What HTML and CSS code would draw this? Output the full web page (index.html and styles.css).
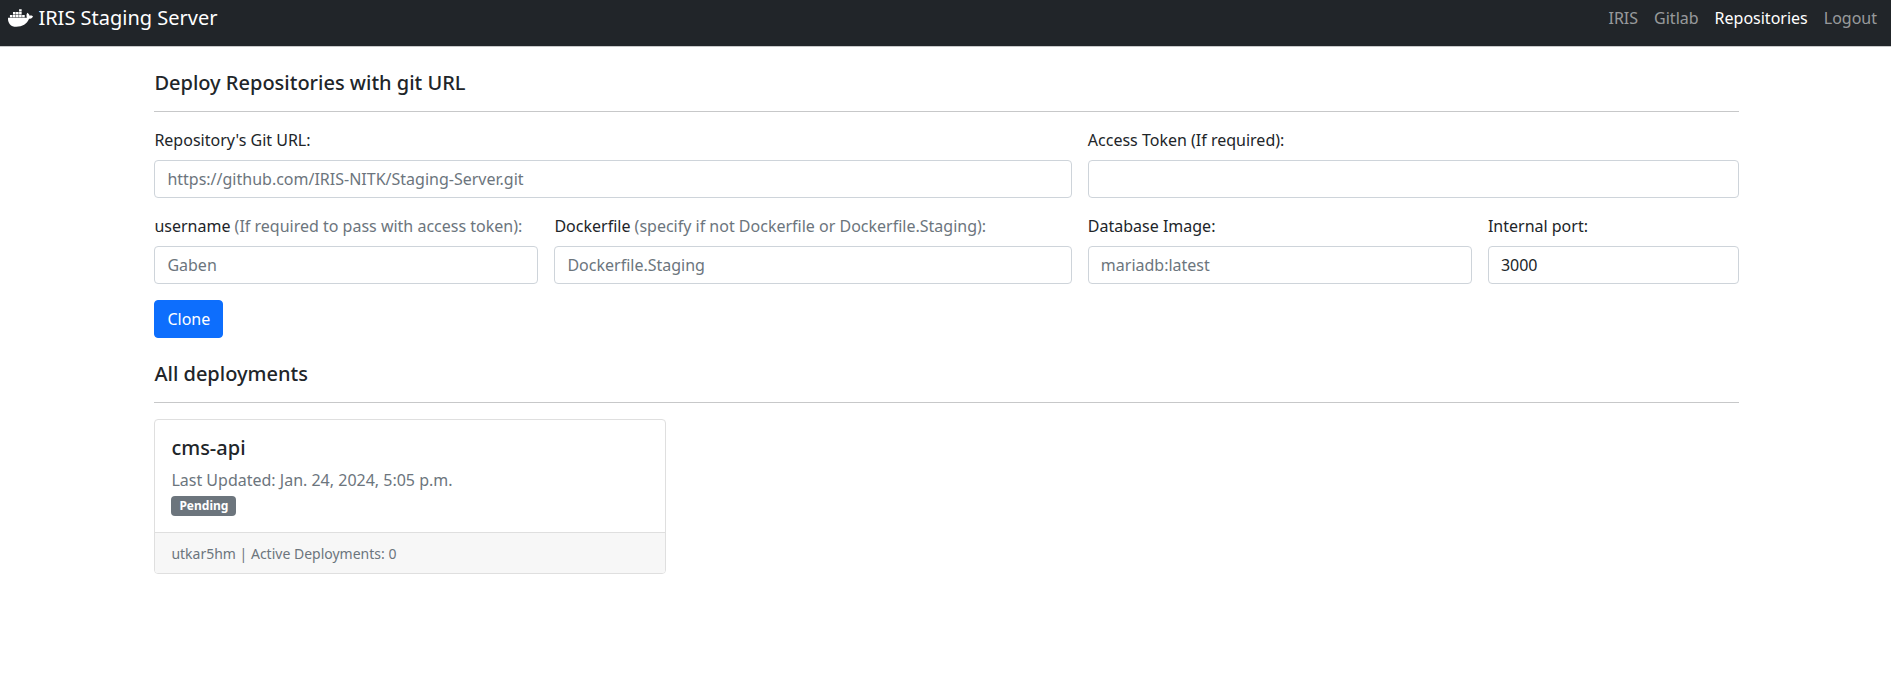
FILE: index.html
```html
<!DOCTYPE html>
<html lang="en">
<head>
<meta charset="utf-8">
<title>IRIS Staging Server</title>
<link rel="stylesheet" href="styles.css">
</head>
<body>
<nav class="navbar">
  <a class="brand" href="#">
    <svg class="brand-icon" viewBox="0 0 640 512" fill="currentColor" aria-hidden="true"><path d="M349.9 236.3h-66.1v-59.4h66.1v59.4zm0-204.3h-66.1v60.7h66.1V32zm78.2 144.8H362v59.4h66.1v-59.4zm-156.3-72.1h-66.1v60.1h66.1v-60.1zm78.1 0h-66.1v60.1h66.1v-60.1zm276.800 100c-14.400-9.700-47.600-13.200-73.100-8.400-3.300-24-16.700-44.900-41.100-63.700l-14-9.300-9.300 14c-18.400 27.800-23.400 73.600-3.700 103.800-8.700 4.700-25.800 11.100-48.400 10.700H2.400c-8.700 50.800 5.800 116.800 44 162.100 37.100 43.900 92.700 66.200 165.400 66.200 157.400 0 273.900-72.500 328.400-204.200 21.400.4 67.600.1 91.300-45.200 1.500-2.500 6.600-13.200 8.500-17.100l-13.300-8.900zm-511.100-27.900h-66v59.400h66.100v-59.400zm78.100 0h-66.100v59.400h66.100v-59.400zm78.100 0h-66.100v59.400h66.100v-59.400zm-78.100-72.100h-66.100v60.100h66.100v-60.100z"/></svg>
    <span>IRIS Staging Server</span>
  </a>
  <div class="nav-links">
    <a href="#">IRIS</a>
    <a href="#">Gitlab</a>
    <a class="active" href="#">Repositories</a>
    <a href="#">Logout</a>
  </div>
</nav>
<main class="content">
  <h5 class="heading">Deploy Repositories with git URL</h5>
  <form class="form">
    <div class="field span-7">
      <label>Repository's Git URL:</label>
      <input type="text" placeholder="https://github.com/IRIS-NITK/Staging-Server.git">
    </div>
    <div class="field span-5">
      <label>Access Token (If required):</label>
      <input type="text">
    </div>
    <div class="field span-3">
      <label>username <span class="muted">(If required to pass with access token):</span></label>
      <input type="text" placeholder="Gaben">
    </div>
    <div class="field span-4">
      <label>Dockerfile <span class="muted">(specify if not Dockerfile or Dockerfile.Staging):</span></label>
      <input type="text" placeholder="Dockerfile.Staging">
    </div>
    <div class="field span-3">
      <label>Database Image:</label>
      <input type="text" placeholder="mariadb:latest">
    </div>
    <div class="field span-2">
      <label>Internal port:</label>
      <input type="text" value="3000">
    </div>
    <button class="btn" type="button">Clone</button>
  </form>
  <h5 class="heading">All deployments</h5>
  <div class="cards">
    <article class="card">
      <div class="card-body">
        <h5 class="card-title">cms-api</h5>
        <div class="muted">Last Updated: Jan. 24, 2024, 5:05 p.m.</div>
        <span class="badge">Pending</span>
      </div>
      <div class="card-footer"><small>utkar5hm | Active Deployments: 0</small></div>
    </article>
  </div>
</main>
</body>
</html>
```
FILE: styles.css
```css
* { box-sizing: border-box; }
body {
  margin: 0;
  background: #fff;
  color: #212529;
  font: 400 16px/24px "Noto Sans", "Liberation Sans", sans-serif;
}
.navbar {
  display: flex;
  justify-content: space-between;
  height: 47px;
  padding: 0 14px 10px 8px;
  align-items: center;
  background: #212529;
  border-bottom: 1px solid #c8c9ca;
}
.brand {
  display: flex;
  align-items: center;
  gap: 5.4px;
  color: #fff;
  font-size: 20px;
  line-height: 30px;
  text-decoration: none;
}
.brand-icon { width: 25px; height: 20px; margin-bottom: 1px; }
.nav-links { display: flex; gap: 16px; }
.nav-links a { color: rgba(255, 255, 255, .55); text-decoration: none; }
.nav-links .active { color: #fff; }
.content { padding: 24px 152.4px 0 154.4px; }
.heading {
  margin: 0 0 16px;
  padding-bottom: 16px;
  border-bottom: 1px solid #c7c8c9;
  font-size: 20px;
  line-height: 24px;
  font-weight: 500;
}
.form {
  display: grid;
  grid-template-columns: repeat(12, minmax(0, 1fr));
  gap: 16px;
  margin-bottom: 24px;
}
.field { display: flex; flex-direction: column; gap: 8px; }
.field label { white-space: nowrap; }
.span-2 { grid-column: span 2; }
.span-3 { grid-column: span 3; }
.span-4 { grid-column: span 4; }
.span-5 { grid-column: span 5; }
.span-7 { grid-column: span 7; }
.muted { color: #6c757d; }
.field input {
  width: 100%;
  height: 38px;
  padding: 6px 12px;
  border: 1px solid #ced4da;
  border-radius: 4px;
  background: #fff;
  color: #212529;
  font: inherit;
}
.field input::placeholder { color: #6c757d; opacity: 1; }
.btn {
  grid-column: 1 / -1;
  justify-self: start;
  height: 38px;
  padding: 6px 12px;
  border: 1px solid #0d6efd;
  border-radius: 4px;
  background: #0d6efd;
  color: #fff;
  font: inherit;
}
.cards {
  display: grid;
  grid-template-columns: repeat(3, minmax(0, 1fr));
  gap: 24px;
}
.card {
  border: 1px solid #dfdfdf;
  border-radius: 4px;
  overflow: hidden;
}
.card-body { height: 112px; padding: 16px; }
.card-title {
  margin: 0 0 8px;
  font-size: 20px;
  line-height: 24px;
  font-weight: 500;
}
.badge {
  display: block;
  width: fit-content;
  margin-top: 4px;
  padding: 4px 8px;
  border-radius: 4px;
  background: #6c757d;
  color: #fff;
  font-size: 12px;
  line-height: 12px;
  font-weight: 700;
}
.card-footer {
  height: 41px;
  padding: 8px 16px;
  border-top: 1px solid #dfdfdf;
  background: #f7f7f7;
  color: #6c757d;
}
.card-footer small { font-size: 14px; }
```
